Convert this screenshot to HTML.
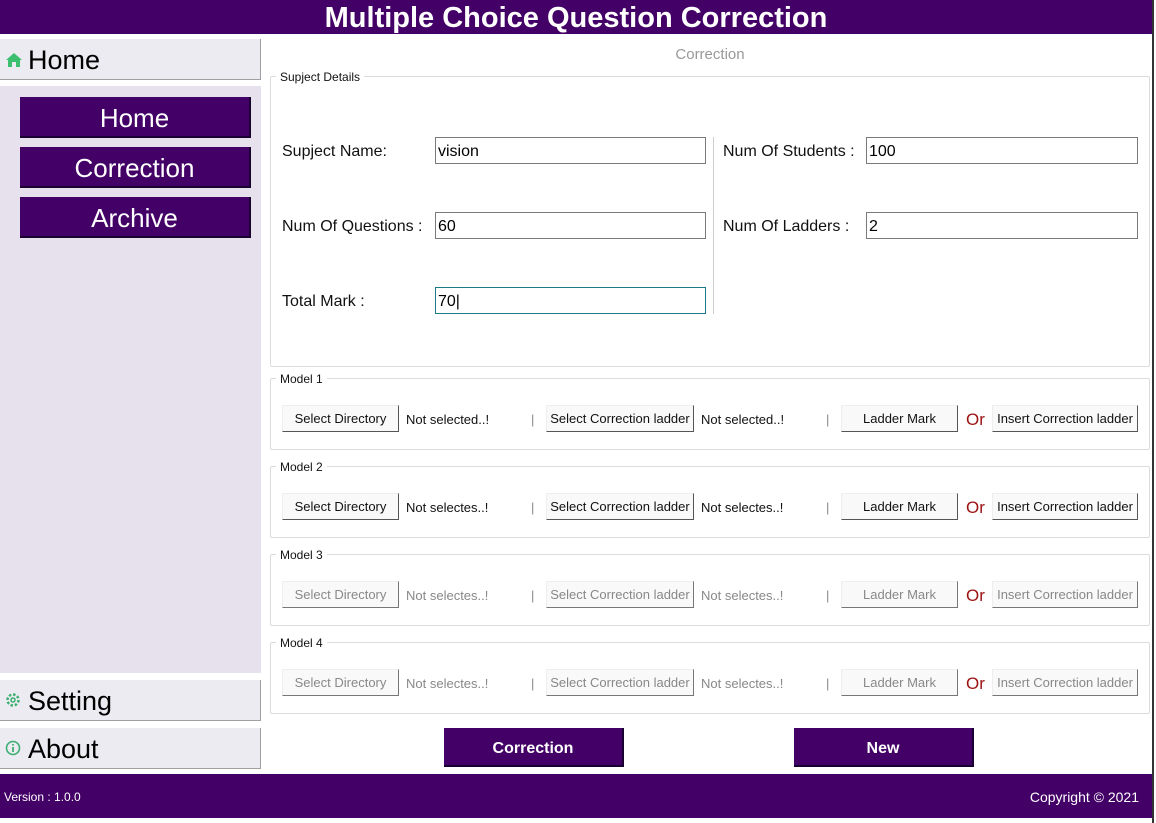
<!DOCTYPE html>
<html><head><meta charset="utf-8"><style>
*{margin:0;padding:0;box-sizing:border-box}
body{width:1156px;height:823px;position:relative;background:#fff;font-family:"Liberation Sans",sans-serif;overflow:hidden}
.a{position:absolute}
.p{background:#430066;color:#fff}
.side{background:#ecebf2;border-bottom:1px solid #a0a0a0;border-right:1px solid #a0a0a0;font-size:27px;color:#000;padding-left:28px;line-height:43px}
.nb{left:20px;width:231px;height:41px;font-size:26px;text-align:center;line-height:43px;border-right:2px solid #1a0030;border-bottom:2px solid #1a0030}
.lbl{font-size:16px;color:#111}
.inp{border:1px solid #7a7a7a;height:27px;font-size:16px;padding-left:2px;line-height:27px}
.grp{border:1px solid #dcdcdc;border-radius:2px}
.gt{font-size:12px;background:#fff;padding:0 4px;color:#111}
.btn{height:27px;background:#f9f9f9;border-right:1px solid #555;border-bottom:1px solid #555;border-top:1px solid #eee;border-left:1px solid #eee;font-size:13px;text-align:center;line-height:26px;color:#111}
.t{font-size:13px;color:#111}
.dis .btn,.dis .t{color:#888}
.dis .btn{border-right-color:#777;border-bottom-color:#777}
.or{font-size:17px;color:#9b1010}
</style></head><body>
<div class="a p" style="left:0;top:0;width:1152px;height:34px;text-align:center;font-size:29px;font-weight:bold;line-height:36px">Multiple Choice Question Correction</div>
<div class="a" style="left:1152px;top:0;width:2px;height:823px;background:#333"></div>

<div class="a side" style="left:0;top:39px;width:261px;height:41px">Home</div>
<svg class="a" style="left:6px;top:53px" width="16" height="14" viewBox="0 0 16 14"><path d="M8 0L0 7h2v7h4V9h4v5h4V7h2z" fill="#3cc070"/></svg>
<div class="a" style="left:0;top:86px;width:261px;height:587px;background:#e6e1ec"></div>
<div class="a p nb" style="top:97px">Home</div>
<div class="a p nb" style="top:147px">Correction</div>
<div class="a p nb" style="top:197px">Archive</div>
<div class="a side" style="left:0;top:680px;width:261px;height:41px">Setting</div>
<svg class="a" style="left:5px;top:692px" width="16" height="16" viewBox="0 0 16 16"><circle cx="8" cy="8" r="5.5" fill="none" stroke="#3cb070" stroke-width="2.5" stroke-dasharray="2.5 1.8"/><circle cx="8" cy="8" r="2" fill="none" stroke="#3cb070" stroke-width="1.5"/></svg>
<div class="a side" style="left:0;top:728px;width:261px;height:41px">About</div>
<svg class="a" style="left:5px;top:740px" width="16" height="16" viewBox="0 0 16 16"><circle cx="8" cy="8" r="6.5" fill="none" stroke="#3cb070" stroke-width="1.6"/><path d="M8 7v5M8 4v1.5" stroke="#3cb070" stroke-width="1.8"/></svg>

<div class="a" style="left:270px;top:46px;width:880px;text-align:center;font-size:15px;color:#999">Correction</div>

<div class="a grp" style="left:270px;top:76px;width:880px;height:291px"></div>
<div class="a gt" style="left:276px;top:70px">Supject Details</div>
<div class="a lbl" style="left:282px;top:143px">Supject Name:</div>
<div class="a inp" style="left:435px;top:137px;width:271px">vision</div>
<div class="a lbl" style="left:282px;top:218px">Num Of Questions :</div>
<div class="a inp" style="left:435px;top:212px;width:271px">60</div>
<div class="a lbl" style="left:282px;top:293px">Total Mark :</div>
<div class="a inp" style="left:435px;top:287px;width:271px;border-color:#1a7a8a">70|</div>
<div class="a" style="left:713px;top:137px;width:1px;height:177px;background:#ccc"></div>
<div class="a lbl" style="left:723px;top:143px">Num Of Students :</div>
<div class="a inp" style="left:866px;top:137px;width:272px">100</div>
<div class="a lbl" style="left:723px;top:218px">Num Of Ladders :</div>
<div class="a inp" style="left:866px;top:212px;width:272px">2</div>

<div id="m"></div>
<script>
var ys=[378,466,554,642],tx=["Not selected..!","Not selectes..!","Not selectes..!","Not selectes..!"],h="";
for(var i=0;i<4;i++){var y=ys[i],b=y+27;
h+='<div class="'+(i>1?'dis':'')+'">'+
'<div class="a grp" style="left:270px;top:'+y+'px;width:880px;height:72px"></div>'+
'<div class="a gt" style="left:276px;top:'+(y-6)+'px">Model '+(i+1)+'</div>'+
'<div class="a btn" style="left:282px;top:'+b+'px;width:117px">Select Directory</div>'+
'<div class="a t" style="left:406px;top:'+(b+7)+'px">'+tx[i]+'</div>'+
'<div class="a t" style="left:531px;top:'+(b+7)+'px;color:#888">|</div>'+
'<div class="a btn" style="left:546px;top:'+b+'px;width:148px">Select Correction ladder</div>'+
'<div class="a t" style="left:701px;top:'+(b+7)+'px">'+tx[i]+'</div>'+
'<div class="a t" style="left:826px;top:'+(b+7)+'px;color:#888">|</div>'+
'<div class="a btn" style="left:841px;top:'+b+'px;width:117px">Ladder Mark</div>'+
'<div class="a or" style="left:966px;top:'+(b+5)+'px">Or</div>'+
'<div class="a btn" style="left:992px;top:'+b+'px;width:146px">Insert Correction ladder</div></div>';}
document.getElementById('m').innerHTML=h;
</script>

<div class="a p" style="left:444px;top:728px;width:180px;height:39px;font-size:16px;font-weight:bold;text-align:center;line-height:42px;border-right:2px solid #1a0030;border-bottom:2px solid #1a0030">Correction</div>
<div class="a p" style="left:794px;top:728px;width:180px;height:39px;font-size:16px;font-weight:bold;text-align:center;line-height:42px;border-right:2px solid #1a0030;border-bottom:2px solid #1a0030">New</div>

<div class="a p" style="left:0;top:774px;width:1152px;height:44px"></div>
<div class="a" style="left:4px;top:790px;color:#fff;font-size:12px">Version : 1.0.0</div>
<div class="a" style="right:17px;top:789px;color:#fff;font-size:14px">Copyright © 2021</div>
</body></html>
